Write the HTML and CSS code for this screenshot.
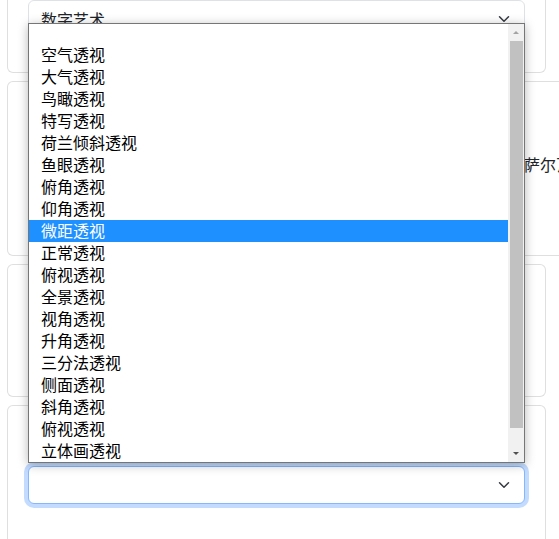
FILE: index.html
```html
<!DOCTYPE html>
<html lang="zh-CN">
<head>
<meta charset="utf-8">
<title>透视选择</title>
<link rel="stylesheet" href="styles.css">
</head>
<body>
<div class="page">
  <div class="card card-first">
    <div class="select">
      <span class="select-value">数字艺术</span>
      <svg class="chevron" width="16" height="12" viewBox="0 0 16 16"><path d="M2 5l6 6 6-6" fill="none" stroke="#343a40" stroke-width="2" stroke-linecap="round" stroke-linejoin="round"/></svg>
    </div>
  </div>
  <div class="card card-wide">
    <p class="desc">画面风格参考超现实主义大师作品，色彩浓郁，构图奇特，灵感来自于萨尔瓦多·达利</p>
  </div>
  <div class="card card-mid"></div>
  <div class="card card-last">
    <div class="select select-focus">
      <span class="select-value"></span>
      <svg class="chevron" width="16" height="12" viewBox="0 0 16 16"><path d="M2 5l6 6 6-6" fill="none" stroke="#343a40" stroke-width="2" stroke-linecap="round" stroke-linejoin="round"/></svg>
    </div>
  </div>
</div>

<div class="popup">
  <ul class="options">
    <li class="empty"></li>
    <li>空气透视</li>
    <li>大气透视</li>
    <li>鸟瞰透视</li>
    <li>特写透视</li>
    <li>荷兰倾斜透视</li>
    <li>鱼眼透视</li>
    <li>俯角透视</li>
    <li>仰角透视</li>
    <li class="selected">微距透视</li>
    <li>正常透视</li>
    <li>俯视透视</li>
    <li>全景透视</li>
    <li>视角透视</li>
    <li>升角透视</li>
    <li>三分法透视</li>
    <li>侧面透视</li>
    <li>斜角透视</li>
    <li>俯视透视</li>
    <li>立体画透视</li>
  </ul>
  <div class="scrollbar">
    <div class="sb-btn"><span class="arrow-up"></span></div>
    <div class="thumb"></div>
    <div class="track"></div>
    <div class="sb-btn"><span class="arrow-down"></span></div>
  </div>
</div>
</body>
</html>
```

FILE: styles.css
```css
* {
  box-sizing: border-box;
}

html, body {
  margin: 0;
  padding: 0;
  overflow: hidden;
  background: #ffffff;
}

body {
  font-family: "Noto Sans CJK SC", "Noto Sans", sans-serif;
  font-size: 16px;
  color: #212529;
}

.page {
  display: flex;
  flex-direction: column;
  align-items: flex-start;
  gap: 8px;
  padding-left: 7px;
  margin-top: -21px;
}

.card {
  width: 539px;
  border: 1px solid rgba(0, 0, 0, 0.125);
  border-radius: 6px;
  background: #ffffff;
  padding: 20px;
}

.card-first {
  padding-bottom: 34px;
}

.card-wide {
  width: max-content;
  padding: 70px 20px 79px 20px;
}

.desc {
  margin: 0;
  line-height: 24px;
  white-space: nowrap;
}

.card-mid {
  height: 133px;
}

.card-last {
  padding-top: 60px;
  height: 200px;
}

.select {
  height: 38px;
  display: flex;
  align-items: center;
  padding: 0 12px;
  border: 1px solid #dee2e6;
  border-radius: 6px;
  background: #ffffff;
  line-height: 24px;
}

.select-value {
  flex: 1;
  white-space: nowrap;
}

.chevron {
  display: block;
  flex: none;
}

.select-focus {
  border-color: #86b7fe;
  box-shadow: 0 0 0 4px rgba(13, 110, 253, 0.25);
}

.popup {
  position: absolute;
  left: 28px;
  top: 23px;
  width: 497px;
  display: flex;
  border: 1px solid #767676;
  background: #ffffff;
  box-shadow: 0 2px 10px rgba(0, 0, 0, 0.28);
  z-index: 10;
}

.options {
  list-style: none;
  margin: 0;
  padding: 0;
  flex: 1;
}

.options li {
  height: 22px;
  line-height: 20px;
  padding-left: 12px;
  color: #000000;
  white-space: nowrap;
}

.options li.empty {
  height: 20px;
}

.options li.selected {
  background: #1e90ff;
  color: #ffffff;
}

.scrollbar {
  width: 16px;
  flex: none;
  display: flex;
  flex-direction: column;
  background: #f1f1f1;
}

.sb-btn {
  height: 17px;
  display: flex;
  align-items: center;
  justify-content: center;
}

.arrow-up {
  width: 0;
  height: 0;
  border-left: 3.5px solid transparent;
  border-right: 3.5px solid transparent;
  border-bottom: 3.5px solid #a3a3a3;
}

.arrow-down {
  width: 0;
  height: 0;
  border-left: 3.5px solid transparent;
  border-right: 3.5px solid transparent;
  border-top: 3.5px solid #505050;
}

.thumb {
  height: 387px;
  margin: 0 1px 0 2px;
  background: #c1c1c1;
}

.track {
  flex: 1;
}
```
